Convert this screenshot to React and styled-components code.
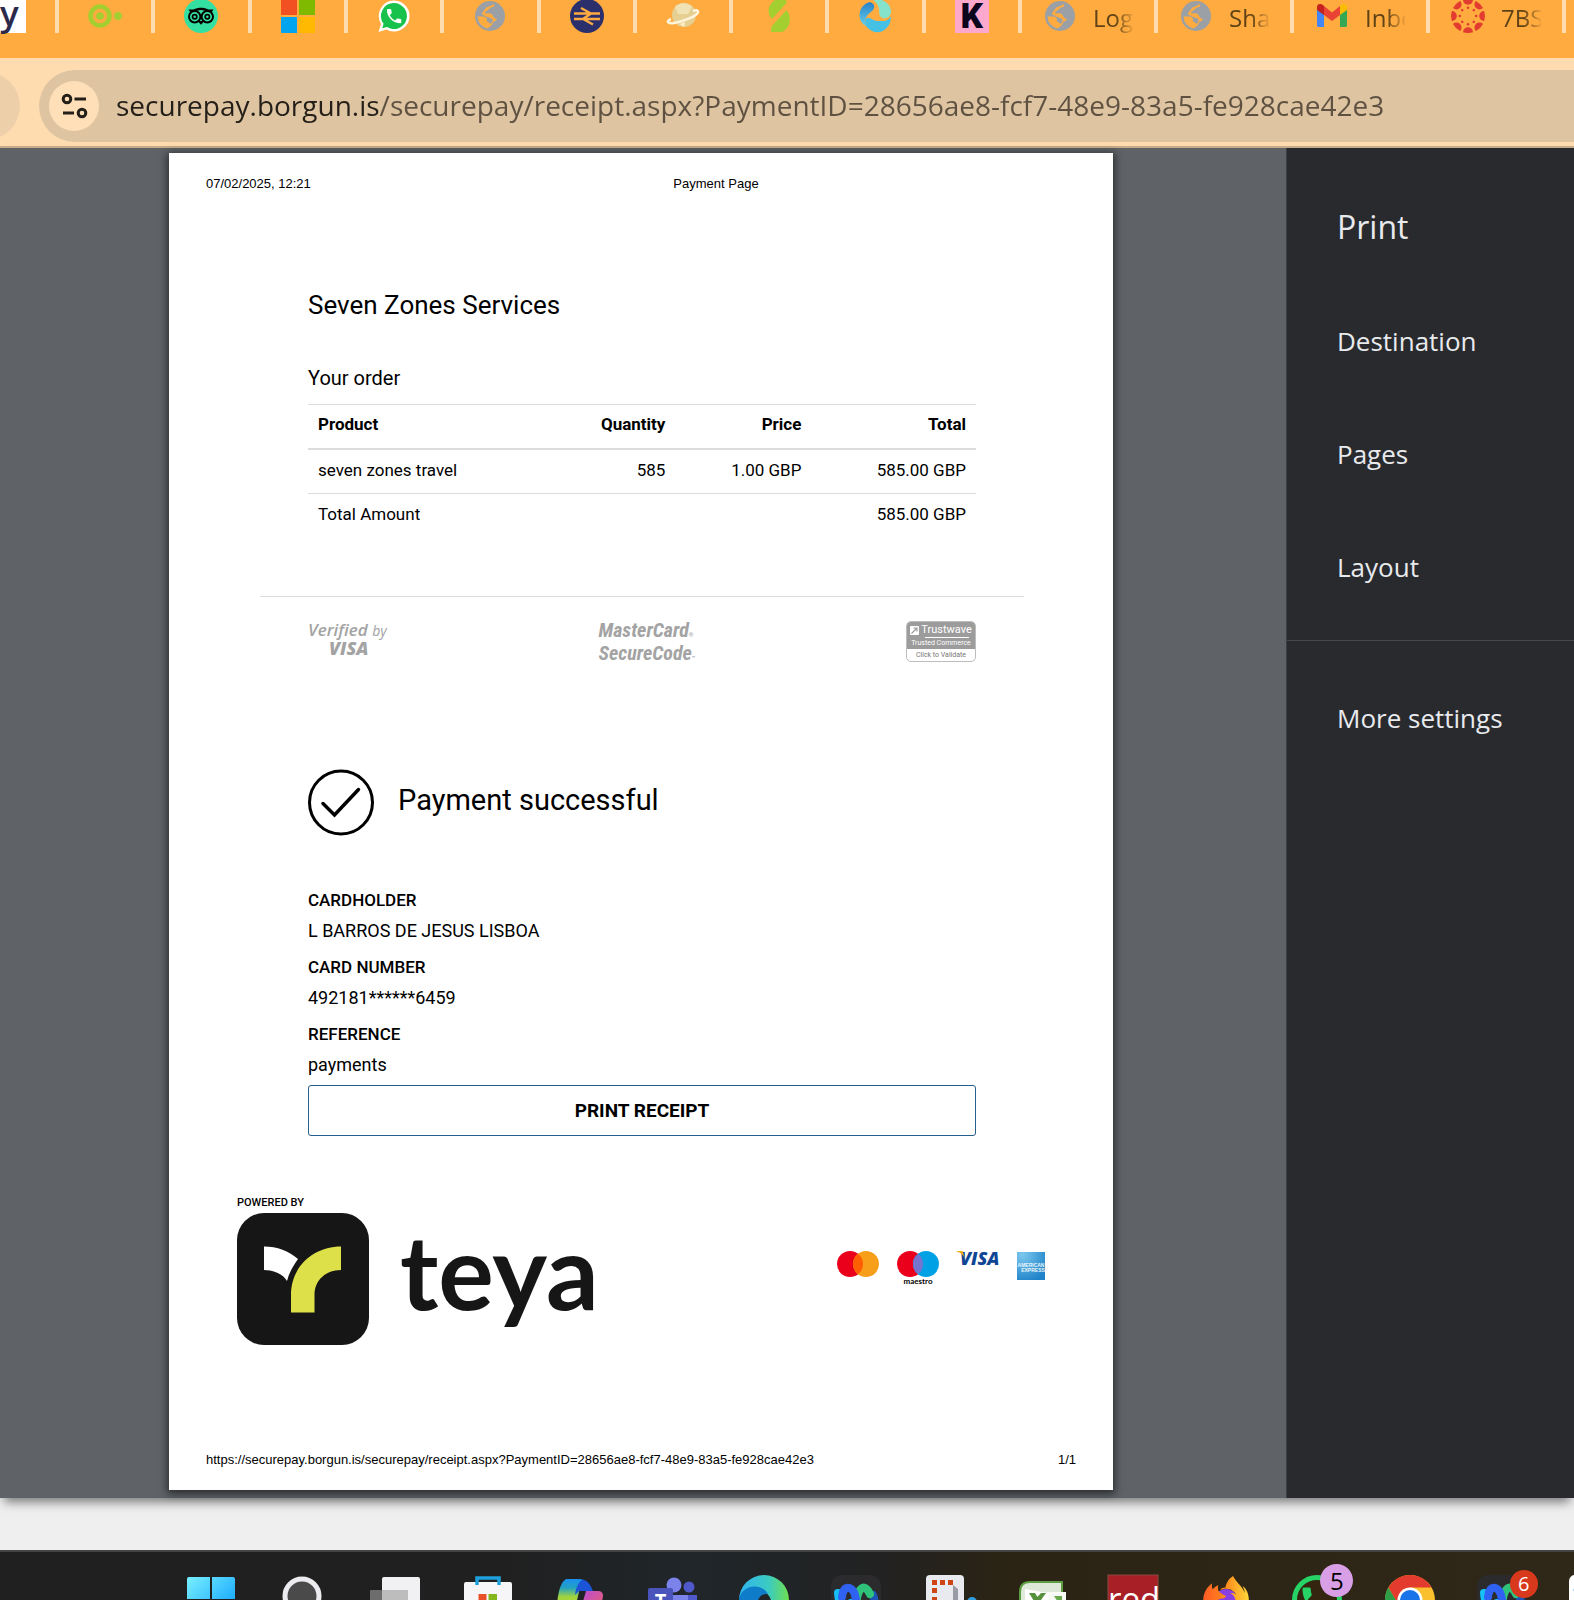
import React from "react";
import styled, { createGlobalStyle } from "styled-components";
import { FaFirefoxBrowser } from "react-icons/fa";

const uiFont = `"Open Sans", "Noto Sans", sans-serif`;
const docFont = `Roboto, "Liberation Sans", sans-serif`;
const arial = `"Liberation Sans", Arial, sans-serif`;

const GlobalStyle = createGlobalStyle`
  *, *::before, *::after { box-sizing: border-box; }
  html, body { margin: 0; padding: 0; background: #202020; }
  h1, h2, h3, p, dl, dd { margin: 0; font-weight: 400; }
  button { font: inherit; color: inherit; background: none; border: 0; padding: 0; }
`;

const Screen = styled.div`
  display: flex;
  flex-direction: column;
  min-height: 100vh;
  overflow: hidden;
  font-family: ${uiFont};
`;

/* ---------- browser chrome ---------- */

const TabStrip = styled.div`
  display: flex;
  height: 58px;
  padding-bottom: 25px;
  overflow: hidden;
  background: #ffab40;
`;

const IconTabs = styled.div`
  display: grid;
  grid-template-columns: repeat(10, 1fr);
  flex: none;
  width: 963px;
`;

const Tab = styled.button`
  display: flex;
  flex: none;
  align-items: flex-end;
  gap: 16px;
  height: 33px;
  width: ${(p) => (p.$wide ? "136px" : "auto")};
  padding-left: ${(p) => (p.$wide ? "21px" : "29px")};
  border-right: 4px solid #ffdcb0;
  font-size: 24px;
  line-height: 30px;
  color: #5f4216;
`;

const FirstTab = styled(Tab)`
  width: 59px;
  padding-left: 0;
`;

const TabTitle = styled.span`
  width: 40px;
  overflow: hidden;
  white-space: nowrap;
  text-align: left;
  mask-image: linear-gradient(90deg, #000 55%, transparent 105%);
`;

const LetterIcon = styled.span`
  display: block;
  flex: none;
  width: ${(p) => p.$width}px;
  height: 34px;
  background: ${(p) => p.$bg};
  color: ${(p) => p.$fg};
  font-family: ${(p) => p.$font};
  font-weight: ${(p) => p.$weight};
  font-size: 35px;
  line-height: ${(p) => p.$line}px;
  text-align: ${(p) => p.$align || "center"};
`;

const Icon = styled.svg`
  display: block;
  flex: none;
  overflow: visible;
  width: ${(p) => p.$w || 34}px;
  height: ${(p) => p.$h || p.$w || 34}px;
`;

const Toolbar = styled.div`
  display: flex;
  align-items: center;
  gap: 19px;
  height: 90px;
  padding-top: 8px;
  background: #ffdcb0;
  border-bottom: 2px solid #c9ad88;
`;

const RoundButton = styled.button`
  flex: none;
  width: 68px;
  height: 68px;
  margin-left: -48px;
  border-radius: 50%;
  background: #edd0aa;
`;

const Omnibox = styled.div`
  display: flex;
  flex: 1;
  align-items: center;
  gap: 17px;
  height: 72px;
  padding-left: 10px;
  border-radius: 36px 0 0 36px;
  background: #dec4a0;
`;

const SiteInfo = styled.button`
  display: grid;
  flex: none;
  place-items: center;
  width: 50px;
  height: 50px;
  border-radius: 50%;
  background: #ffdfb8;
`;

const Address = styled.input`
  flex: 1;
  min-width: 0;
  height: 56px;
  padding: 0 0 2px;
  border: 0;
  outline: 0;
  font-family: ${uiFont};
  font-size: 28px;
  color: #5e5142;
  background: linear-gradient(90deg, #241f19 262px, #5e5142 262px);
  background-clip: text;
  -webkit-text-fill-color: transparent;
`;

/* ---------- print dialog ---------- */

const Dialog = styled.main`
  display: flex;
  flex: 1;
  position: relative;
  background: #5f6368;
  box-shadow: 0 8px 10px -4px rgba(0, 0, 0, 0.5);
`;

const Preview = styled.section`
  display: flex;
  flex: 1;
  justify-content: center;
  align-items: flex-start;
  min-width: 0;
  padding: 5px 4px 8px 0;
`;

const Paper = styled.article`
  width: 100%;
  max-width: 944px;
  padding: 23px 37px 22px;
  background: #fff;
  color: #000;
  font-family: ${docFont};
  font-size: 17px;
  box-shadow: 0 2px 8px 2px rgba(0, 0, 0, 0.55);
`;

const PageMeta = styled.div`
  display: flex;
  font-family: ${arial};
  font-size: 13px;
  line-height: 16px;
`;

const PageDate = styled.span`
  width: 150px;
`;

const PageTitle = styled.span`
  flex: 1;
  text-align: center;
`;

const PageUrl = styled.span`
  flex: 1;
`;

const Receipt = styled.div`
  margin: 97px 100px 0 102px;
`;

const Merchant = styled.h1`
  font-size: 26px;
  line-height: 32px;
`;

const OrderTitle = styled.h2`
  margin-top: 45px;
  font-size: 20px;
  line-height: 24px;
`;

const Table = styled.table`
  width: 100%;
  margin-top: 14px;
  border-spacing: 0;
  table-layout: fixed;
`;

const Col = styled.col`
  width: ${(p) => p.$w};
`;

const HeadCell = styled.th`
  height: 46px;
  padding: 0 10px 5px;
  border-top: 1px solid #dcdcdc;
  border-bottom: 2px solid #dcdcdc;
  text-align: ${(p) => (p.$num ? "right" : "left")};
  font-weight: 700;
`;

const Cell = styled.td`
  height: ${(p) => (p.$total ? 45 : 43)}px;
  padding: 0 10px 4px;
  border-top: ${(p) => (p.$total ? "1px solid #dcdcdc" : "0")};
  text-align: ${(p) => (p.$num ? "right" : "left")};
`;

const Rule = styled.hr`
  height: 1px;
  margin: 58px -48px 24px;
  border: 0;
  background: #dcdcdc;
`;

const Badges = styled.div`
  display: flex;
  justify-content: space-between;
  height: 41px;
  color: #a3a3a3;
`;

const VerifiedBy = styled.div`
  width: 82px;
  font: italic 600 17px/17px ${uiFont};
  white-space: nowrap;
`;

const Small = styled.span`
  font-size: 14px;
  font-weight: 400;
`;

const VisaWord = styled.div`
  padding-left: 21px;
  font: italic 800 18px/18px ${uiFont};
`;

const SecureCode = styled.div`
  width: 99px;
  font: italic 700 20px/18px "Liberation Sans Narrow", "Roboto Condensed", Roboto, sans-serif;
  white-space: nowrap;
`;

const Mark = styled.span`
  font-size: 6px;
  font-style: normal;
`;

const Trustwave = styled.button`
  width: 70px;
  height: 41px;
  overflow: hidden;
  border: 1px solid #bdbdbd;
  border-radius: 5px;
  background: #fff;
  font-family: ${docFont};
  text-align: center;
`;

const TrustTop = styled.span`
  display: flex;
  flex-direction: column;
  align-items: center;
  height: 27px;
  padding: 2px 0 0;
  background: #9c9c9c;
  color: #fff;
  font-size: 7px;
  line-height: 9px;
`;

const TrustName = styled.span`
  display: flex;
  align-items: center;
  gap: 2px;
  font-size: 11px;
  line-height: 12px;
`;

const TrustLine = styled.span`
  width: 44px;
  height: 1px;
  margin: 1px 0 1px 12px;
  background: #fff;
`;

const TrustBottom = styled.span`
  display: block;
  color: #777;
  font-size: 7px;
  line-height: 12px;
`;

const Status = styled.div`
  display: flex;
  align-items: center;
  gap: 24px;
  margin-top: 107px;
`;

const StatusText = styled.h2`
  padding-bottom: 6px;
  font-size: 29px;
  line-height: 36px;
`;

const Details = styled.dl`
  display: grid;
  gap: 5px;
  margin-top: 49px;
`;

const Label = styled.dt`
  line-height: 30px;
  font-weight: 500;
`;

const Value = styled.dd`
  font-size: 18px;
  line-height: 32px;
`;

const PrintButton = styled.button`
  display: block;
  width: 100%;
  height: 51px;
  margin-top: 4px;
  border: 1px solid #24608c;
  border-radius: 3px;
  font-size: 19px;
  font-weight: 700;
`;

const Powered = styled.div`
  margin: 60px 31px 0;
`;

const PoweredLabel = styled.p`
  font-size: 11px;
  line-height: 14px;
  font-weight: 500;
`;

const BrandRow = styled.div`
  display: flex;
  align-items: flex-start;
  justify-content: space-between;
  margin-top: 3px;
`;

const Brand = styled.div`
  display: flex;
  align-items: center;
  gap: 31px;
`;

const BrandName = styled.span`
  padding-bottom: 18px;
  font: 700 104px/114px Lato, sans-serif;
  color: #161616;
`;

const Cards = styled.div`
  display: flex;
  gap: 18px;
  margin-top: 38px;
`;

const PageFoot = styled(PageMeta)`
  margin-top: 107px;
`;

const Sidebar = styled.aside`
  width: 288px;
  flex: none;
  padding-top: 57px;
  border-left: 1px solid #3c4043;
  background: #292a2d;
  color: #e8eaed;
  font-size: 26px;
  line-height: 36px;
`;

const SideTitle = styled.h1`
  padding-left: 50px;
  font-size: 32px;
  line-height: 44px;
`;

const Options = styled.div`
  display: grid;
  gap: 77px;
  padding: 74px 0 55px 50px;
  border-bottom: 1px solid #46484c;
`;

const MoreSettings = styled.button`
  display: block;
  margin: 59px 0 0 50px;
`;

const Shelf = styled.div`
  height: 52px;
  background: #efefef;
`;

/* ---------- taskbar ---------- */

const Taskbar = styled.nav`
  height: 50px;
  padding-left: 165px;
  overflow: hidden;
  border-top: 2px solid #434343;
  background: linear-gradient(90deg, #202020 0%, #202020 32%, #20262a 44%, #222 56%, #2b2414 64%, #2f2717 100%);
`;

const Apps = styled.div`
  display: grid;
  grid-template-columns: repeat(16, 1fr);
  justify-items: center;
  width: 1475px;
  padding-top: 23px;
`;

const AppButton = styled.button`
  position: relative;
  width: 50px;
  height: 50px;
`;

const Count = styled.span`
  position: absolute;
  top: ${(p) => p.$top}px;
  left: ${(p) => p.$left}px;
  width: ${(p) => p.$size}px;
  height: ${(p) => p.$size}px;
  border-radius: 50%;
  background: ${(p) => p.$bg};
  color: ${(p) => p.$fg};
  font-size: ${(p) => p.$font}px;
  line-height: ${(p) => p.$size}px;
  text-align: center;
`;

const PHONE =
  "M6.62 10.79c1.44 2.83 3.76 5.14 6.59 6.59l2.2-2.2c.27-.27.67-.36 1.02-.24 1.12.37 2.33.57 3.57.57.55 0 1 .45 1 1V20c0 .55-.45 1-1 1-9.39 0-17-7.61-17-17 0-.55.45-1 1-1h3.5c.55 0 1 .45 1 1 0 1.25.2 2.45.57 3.57.11.35.03.74-.25 1.02l-2.2 2.2z";

const Globe = () => (
  <Icon viewBox="0 0 34 34">
    <circle cx="17" cy="17" r="15" fill="#9aa0a6" />
    <path d="M22 4.500C23 8 20 7.500 18 8.500S15.500 11 13.500 12 11.500 14.500 14 14.500C17 14 19 14.500 20 17S23 19 23.500 20.500 20 22.500 19.500 24.500 16 28.500 14.500 29.500A12.500 12.500 0 0 1 4.500 17.500C8 17.500 12 17 13.500 19S12.500 22 14.500 22.500 16.500 26 18.500 24 20 20 17.500 19 13.500 18 11 16.500 8 15 11 11.500 13 8.500 16 7.500Z" fill="#ffab40" />
    <path d="M21 4.500Q27 6.500 29 12.500L29.500 16Q25 16.500 22.500 14.500T23.500 10.500 21 7.500Z" fill="#9aa0a6" />
  </Icon>
);

const TargetIcon = () => (
  <Icon viewBox="0 0 34 34">
    <circle cx="12" cy="17" r="9.500" fill="none" stroke="#a4cf30" strokeWidth="4.500" />
    <circle cx="12" cy="17" r="3.800" fill="#a4cf30" />
    <circle cx="30" cy="17" r="4" fill="#a4cf30" />
  </Icon>
);

const OwlIcon = () => (
  <Icon viewBox="0 0 34 34">
    <circle cx="17" cy="17" r="17" fill="#34e0a1" />
    <path d="M4.500 10.500H9.500C14 8 20 8 24.500 10.500H29.500L27.500 13.500 17 15.500 6.500 13.500Z" fill="#000" />
    <path d="M13.500 22H20.500L17 25.800Z" fill="#000" />
    <path d="M11 12.500Q17 9.500 23 12.500L17 17Z" fill="#34e0a1" />
    {[10.7, 23.3].map((x) => (
      <g key={x}>
        <circle cx={x} cy="17.700" r="6.700" fill="#000" />
        <circle cx={x} cy="17.700" r="4.700" fill="#34e0a1" />
        <circle cx={x} cy="17.700" r="3" fill="#000" />
        <circle cx={x} cy="17.700" r="1.300" fill="#34e0a1" />
      </g>
    ))}
  </Icon>
);

const MicrosoftIcon = () => (
  <Icon viewBox="0 0 34 34">
    <path d="M0 0H16V16H0Z" fill="#f25022" />
    <path d="M18 0H34V16H18Z" fill="#7fba00" />
    <path d="M0 18H16V34H0Z" fill="#00a4ef" />
    <path d="M18 18H34V34H18Z" fill="#ffb900" />
  </Icon>
);

const WhatsAppTab = () => (
  <Icon viewBox="0 0 34 34">
    <path d="M17 1.500A15.500 15.500 0 1 1 9.500 30.500L1.500 33 4 25A15.500 15.500 0 0 1 17 1.500Z" fill="#fff" />
    <path d="M17 4A13 13 0 1 1 10 28L5.300 29.300 6.600 24.800A13 13 0 0 1 17 4Z" fill="#16c24b" />
    <path d={PHONE} fill="#fff" transform="translate(7.500 7.500) scale(.8)" />
  </Icon>
);

const RailIcon = () => (
  <Icon viewBox="0 0 34 34">
    <circle cx="17" cy="17" r="17" fill="#2b2f6b" />
    <path d="M4 14.500H30M4 20H30M11 9L21 14.500 13 20 23 25.500" fill="none" stroke="#ffab40" strokeWidth="2.400" />
  </Icon>
);

const PlanetIcon = () => (
  <Icon viewBox="0 0 34 34">
    <circle cx="18" cy="16" r="12" fill="#e5cf91" />
    <path d="M9 8C13 3 22 3 26 8L22 15H12Z" fill="#f1e2b4" />
    <path d="M5 20C0 22 1 25 8 24S32 17 32 13C32 11 29 11 27 12" fill="none" stroke="#fff5dc" strokeWidth="2.600" />
    <path d="M14 25L19 23 18 28Z" fill="#fff1cc" />
  </Icon>
);

const SlashIcon = () => (
  <Icon viewBox="0 0 34 34">
    <path d="M13 1H24L24.500 4 10 20C5 15 5 6 13 1Z" fill="#a4cf30" />
    <path d="M24.500 11L9.500 27.500 9 33H20C29 29 30 17 24.500 11Z" fill="#a4cf30" />
  </Icon>
);

const SwirlIcon = () => (
  <Icon viewBox="0 0 34 34">
    <defs>
      <linearGradient id="sw" x1="0" y1="0" x2="0" y2="1">
        <stop offset="0" stopColor="#2a7fc4" />
        <stop offset="1" stopColor="#63d3ee" />
      </linearGradient>
    </defs>
    <path d="M14 0C21-1 32 2 33 12 33 20 25 21 22 17 20 13 24 7 14 0Z" fill="#86e3cb" />
    <path d="M12 3C18 5 17 10 13 13S6 19 8 27C-1 23-1 6 12 3Z" fill="url(#sw)" />
    <path d="M8 20C10 16 15 22 20 22S30 23 33 17C33 30 22 36 14 32 8 29 6 25 8 20Z" fill="#45c1e6" />
  </Icon>
);

const GmailIcon = () => (
  <Icon viewBox="0 0 34 34">
    <path d="M2 10V26.500A1.500 1.500 0 0 0 3.500 28H9V14Z" fill="#4285f4" />
    <path d="M32 10V26.500A1.500 1.500 0 0 1 30.500 28H25V14Z" fill="#34a853" />
    <path d="M9 7L17 13.500 25 7V16L17 22 9 16Z" fill="#ea4335" />
    <path d="M2 8C2 4.500 6 4 9 7V16L2 11Z" fill="#c5221f" />
    <path d="M32 8C32 4.500 28 4 25 7V16L32 11Z" fill="#fbbc04" />
  </Icon>
);

const CanvasIcon = () => (
  <Icon viewBox="0 0 34 34" fill="#e23b30">
    {[0, 45, 90, 135, 180, 225, 270, 315].map((a) => (
      <g key={a} transform={`rotate(${a} 17 17)`}>
        <path d="M12 .8A17 17 0 0 1 22 .8 5 5 0 0 1 12 .8Z" />
        <circle cx="17" cy="8.800" r="1.300" />
      </g>
    ))}
  </Icon>
);

const TuneIcon = () => (
  <Icon viewBox="0 0 28 28" $w={28} fill="none" stroke="#241f19" strokeWidth="3">
    <circle cx="7" cy="7" r="3.800" />
    <path d="M14.500 7H26M3 21H14" />
    <circle cx="22" cy="21" r="3.800" />
  </Icon>
);

const CheckCircle = () => (
  <Icon viewBox="0 0 66 67" $w={66} $h={67} fill="none" stroke="#000" strokeWidth="3">
    <circle cx="33" cy="33.500" r="31.500" />
    <path d="M15 34.500L26.500 46 50.500 20.500" strokeLinecap="round" strokeWidth="3.500" />
  </Icon>
);

const TeyaMark = () => (
  <Icon viewBox="0 0 132 132" $w={132}>
    <rect width="132" height="132" rx="27" fill="#161616" />
    <path d="M27 33.500C40 33.500 52 38 61 46 56 53 52 60 50 68 46 61 37 57 27 57Z" fill="#fff" />
    <path d="M104 33.500V57C89 57 77.500 67 77.500 82V99.500H54V82C54 53 77 33.500 104 33.500Z" fill="#dde048" />
  </Icon>
);

const MasterCardIcon = () => (
  <Icon viewBox="0 0 42 34" $w={42} $h={34}>
    <circle cx="13" cy="13" r="13" fill="#eb001b" />
    <circle cx="29" cy="13" r="13" fill="#f79e1b" />
    <path d="M21 2.700A13 13 0 0 1 21 23.300 13 13 0 0 1 21 2.700Z" fill="#ff5f00" />
  </Icon>
);

const MaestroIcon = () => (
  <Icon viewBox="0 0 42 34" $w={42} $h={34}>
    <circle cx="13" cy="13" r="13" fill="#eb001b" />
    <circle cx="29" cy="13" r="13" fill="#00a2e5" />
    <path d="M21 2.700A13 13 0 0 1 21 23.300 13 13 0 0 1 21 2.700Z" fill="#7375cf" />
    <text x="21" y="33" textAnchor="middle" fontFamily="Lato" fontWeight="700" fontSize="8">maestro</text>
  </Icon>
);

const VisaIcon = () => (
  <Icon viewBox="0 0 42 34" $w={42} $h={34}>
    <text x="3" y="13.500" fontFamily="Open Sans" fontStyle="italic" fontWeight="800" fontSize="18" fill="#0e4595">VISA</text>
    <path d="M0 0H5.500L8 7.500C6 3.500 3 1.500 0 .8Z" fill="#f2ae14" />
  </Icon>
);

const AmexIcon = () => (
  <Icon viewBox="0 0 28 34" $w={28} $h={34}>
    <defs>
      <radialGradient id="ax" cx=".2" cy=".1" r="1">
        <stop offset="0" stopColor="#7cc7ee" />
        <stop offset="1" stopColor="#1e83c8" />
      </radialGradient>
    </defs>
    <rect y="1" width="28" height="28" fill="url(#ax)" />
    <text x="14" y="15.500" textAnchor="middle" fontFamily="Liberation Sans" fontWeight="700" fontSize="5" fill="#e8f5fc">AMERICAN</text>
    <text x="16" y="21" textAnchor="middle" fontFamily="Liberation Sans" fontWeight="700" fontSize="5" fill="#e8f5fc">EXPRESS</text>
  </Icon>
);

/* ---------- taskbar drawings ---------- */

const StartIcon = () => (
  <Icon viewBox="0 0 50 50" $w={50}>
    <defs>
      <linearGradient id="wn" x1="0" y1="0" x2="50" y2="50" gradientUnits="userSpaceOnUse">
        <stop offset="0" stopColor="#7df3ff" />
        <stop offset=".7" stopColor="#22b0ff" />
      </linearGradient>
    </defs>
    <path d="M3 2H24V24H1V4A2 2 0 0 1 3 2ZM26 2H47A2 2 0 0 1 49 4V24H26ZM1 26H24V49H1ZM26 26H49V49H26Z" fill="url(#wn)" />
  </Icon>
);

const SearchIcon = () => (
  <Icon viewBox="0 0 50 50" $w={50}>
    <circle cx="24" cy="21" r="17" fill="#4a4a4a" stroke="#ececf0" strokeWidth="5" />
    <path d="M36 34L45 44" stroke="#ececf0" strokeWidth="5" />
  </Icon>
);

const TaskViewIcon = () => (
  <Icon viewBox="0 0 50 50" $w={50}>
    <rect x="12" y="2" width="38" height="38" rx="2" fill="#f1f1f3" />
    <rect y="15" width="12" height="30" rx="1" fill="#6d6d6d" />
    <rect x="12" y="15" width="26" height="25" fill="#bdbdbd" />
  </Icon>
);

const StoreIcon = () => (
  <Icon viewBox="0 0 50 50" $w={50}>
    <path d="M1 9A2 2 0 0 1 3 7H47A2 2 0 0 1 49 9V45H1Z" fill="#f6f6f8" />
    <path d="M14 10V3H36V10" fill="none" stroke="#1da0dc" strokeWidth="3.500" />
    <path d="M15.500 19H23.500V27H15.500Z" fill="#e8502a" />
    <path d="M25.500 19H34V27H25.500Z" fill="#84b71b" />
  </Icon>
);

const CopilotIcon = () => (
  <Icon viewBox="0 0 50 50" $w={50}>
    <defs>
      <linearGradient id="c1" x1="0" y1="0" x2="0" y2="1">
        <stop offset="0" stopColor="#1a8ff0" />
        <stop offset=".3" stopColor="#23a3c0" />
        <stop offset=".6" stopColor="#a4d43c" />
      </linearGradient>
      <linearGradient id="c2" x1="0" y1="0" x2="1" y2="1">
        <stop offset="0" stopColor="#b54be0" />
        <stop offset="1" stopColor="#f0625c" />
      </linearGradient>
    </defs>
    <path d="M11 4H27L20 34H2C2 24 4 8 11 4Z" fill="url(#c1)" />
    <path d="M23 4C33 4 35 9 38 16H24L20 20C21 12 23 8 28 4Z" fill="#1c54d8" />
    <path d="M31 16H43Q48 16 48 21L45 40H24Z" fill="url(#c2)" />
  </Icon>
);

const TeamsIcon = () => (
  <Icon viewBox="0 0 50 50" $w={50}>
    <circle cx="27" cy="10" r="7.500" fill="#7b83eb" />
    <circle cx="42" cy="12" r="5.500" fill="#5059c9" />
    <path d="M36 20H50V40H36Z" fill="#5059c9" />
    <path d="M24 20H41V45H24Z" fill="#7b83eb" />
    <rect x="1" y="13" width="25" height="25" rx="2" fill="#4b53bc" />
    <text x="13.500" y="33" textAnchor="middle" fontFamily="Open Sans" fontWeight="700" fontSize="20" fill="#fff">T</text>
  </Icon>
);

const EdgeIcon = () => (
  <Icon viewBox="0 0 50 50" $w={50}>
    <defs>
      <linearGradient id="ed">
        <stop offset="0" stopColor="#2fb4f0" />
        <stop offset=".6" stopColor="#3ccbc0" />
        <stop offset="1" stopColor="#6fe04e" />
      </linearGradient>
    </defs>
    <path d="M0 25A25 25 0 0 1 50 25C50 32 40 36 31 32 35 24 28 16 18 14 10 12 2 18 0 25Z" fill="url(#ed)" />
    <path d="M0 25C2 10 22 7 29 19 20 18 16 26 20 40A25 25 0 0 1 0 25Z" fill="#0f7cc9" />
  </Icon>
);

const WebexIcon = () => (
  <Icon viewBox="0 0 50 50" $w={50}>
    <rect width="50" height="50" rx="11" fill="#2b2b2d" />
    <g fill="none" strokeWidth="8" strokeLinecap="round">
      <path d="M42 20C45 26 43 34 38 36" stroke="#1c54b8" />
      <path d="M25 34C26 10 34 8 39 19" stroke="#2fc27a" />
      <path d="M7 18C9 42 18 36 20 28" stroke="#16c0f5" />
      <path d="M11 22C12 10 21 10 24 20 26 32 30 38 34 34" stroke="#2f62f2" />
    </g>
  </Icon>
);

const SnipIcon = () => (
  <Icon viewBox="0 0 50 50" $w={50}>
    <rect x="2" width="38" height="46" rx="4" fill="#e9eaf0" />
    <path d="M29 10L34 14V30H29Z" fill="#9a9ca5" />
    <path d="M8 5H13V10H8ZM16 5H21V10H16ZM24 5H29V10H24ZM8 13H13V18H8ZM8 22H13V27H8Z" fill="#cf4416" />
    <circle cx="48" cy="27" r="5" fill="#2f9ede" />
  </Icon>
);

const ExcelIcon = () => (
  <Icon viewBox="0 0 50 50" $w={50}>
    <path d="M14 7H46V40H4V17Q4 7 14 7Z" fill="#dfe9da" stroke="#5e9e43" strokeWidth="2" />
    <path d="M31 17H50V40H31Z" fill="#f7faf5" />
    <path d="M9 14L32 18V40H9Z" fill="#fff" />
    <path d="M13 18H19L29 34H23ZM25 18H30L20 32 16 28Z" fill="#55923c" />
    <path d="M38 21H46V27H42Z" fill="#6aa84f" />
  </Icon>
);

const RedIcon = () => (
  <Icon viewBox="0 0 50 50" $w={50}>
    <rect width="50" height="50" fill="#a81f26" stroke="#8a4a44" />
    <text x="26" y="36" textAnchor="middle" fontFamily="Open Sans" fontSize="33" fill="#fff">red</text>
  </Icon>
);

const FirefoxIcon = () => (
  <Icon viewBox="0 0 50 50" $w={50}>
    <defs>
      <linearGradient id="ff" x1="0" y1="0" x2="1" y2="0">
        <stop offset="0" stopColor="#ff5a24" />
        <stop offset=".5" stopColor="#ff8a1c" />
        <stop offset="1" stopColor="#ffd83a" />
      </linearGradient>
    </defs>
    <circle cx="26" cy="26" r="12" fill="#8a3fe0" />
    <FaFirefoxBrowser x="2" y="1" size="48" fill="url(#ff)" />
  </Icon>
);

const WhatsAppIcon = () => (
  <Icon viewBox="0 0 50 50" $w={50}>
    <circle cx="25" cy="25" r="22.500" fill="#33250f" stroke="#27d367" strokeWidth="5" />
    <path d={PHONE} fill="#27d367" transform="translate(6 8) scale(1.500)" />
  </Icon>
);

const ChromeIcon = () => (
  <Icon viewBox="0 0 50 50" $w={50}>
    <circle cx="25" cy="25" r="25" fill="#fbc02d" />
    <path d="M3.300 12.500A25 25 0 0 1 46.700 12.500H25L14 31Z" fill="#e33b2e" />
    <path d="M3.300 12.500L16 34 25 50A25 25 0 0 1 3.300 12.500Z" fill="#2e9e48" />
    <circle cx="25" cy="25" r="12.500" fill="#fff" />
    <circle cx="25" cy="25" r="10" fill="#1a73e8" />
  </Icon>
);

const WhiteIcon = () => (
  <Icon viewBox="0 0 50 50" $w={50}>
    <rect width="50" height="50" rx="6" fill="#fff" />
    <path d="M4 15L8 12V18Z" fill="#2f9ede" />
  </Icon>
);

const iconTabs = [
  ["Deals", <TargetIcon />],
  ["Tripadvisor", <OwlIcon />],
  ["Microsoft", <MicrosoftIcon />],
  ["WhatsApp", <WhatsAppTab />],
  ["Website", <Globe />],
  ["National Rail", <RailIcon />],
  ["Planet", <PlanetIcon />],
  ["Slash", <SlashIcon />],
  ["Swirl", <SwirlIcon />],
  ["Klarna", <LetterIcon $width={34} $bg="#ffa8cd" $fg="#0b051d" $font={docFont} $weight={900} $line={36}>K</LetterIcon>],
];

const titledTabs = [
  ["Log", <Globe />],
  ["Sha", <Globe />],
  ["Inbo", <GmailIcon />],
  ["7BS", <CanvasIcon />],
];

const apps = [
  ["Start", StartIcon],
  ["Search", SearchIcon],
  ["Task view", TaskViewIcon],
  ["Store", StoreIcon],
  ["Copilot", CopilotIcon],
  ["Teams", TeamsIcon],
  ["Edge", EdgeIcon],
  ["Webex", WebexIcon],
  ["Snipping tool", SnipIcon],
  ["Excel", ExcelIcon],
  ["Red", RedIcon],
  ["Firefox", FirefoxIcon],
  ["WhatsApp", WhatsAppIcon, { $top: -11, $left: 28, $size: 33, $font: 24, $bg: "#d89fe6", $fg: "#000" }],
  ["Chrome", ChromeIcon],
  ["Webex calls", WebexIcon, { $top: -5, $left: 33, $size: 28, $font: 20, $bg: "#d8391c", $fg: "#fff" }],
  ["Notes", WhiteIcon],
];

const details = [
  ["CARDHOLDER", "L BARROS DE JESUS LISBOA"],
  ["CARD NUMBER", "492181******6459"],
  ["REFERENCE", "payments"],
];

export default function App() {
  return (
    <Screen>
      <GlobalStyle />
      <TabStrip>
        <FirstTab aria-label="First tab">
          <LetterIcon $width={26} $bg="#fff" $fg="#2c2a4a" $font={uiFont} $weight={600} $line={28} $align="left">y</LetterIcon>
        </FirstTab>
        <IconTabs>
          {iconTabs.map(([name, icon]) => (
            <Tab key={name} aria-label={name}>{icon}</Tab>
          ))}
        </IconTabs>
        {titledTabs.map(([name, icon]) => (
          <Tab key={name} $wide>
            {icon}
            <TabTitle>{name}</TabTitle>
          </Tab>
        ))}
      </TabStrip>
      <Toolbar>
        <RoundButton aria-label="Reload" />
        <Omnibox>
          <SiteInfo aria-label="View site information"><TuneIcon /></SiteInfo>
          <Address
            aria-label="Address"
            defaultValue="securepay.borgun.is/securepay/receipt.aspx?PaymentID=28656ae8-fcf7-48e9-83a5-fe928cae42e3"
          />
        </Omnibox>
      </Toolbar>

      <Dialog>
        <Preview>
          <Paper>
            <PageMeta>
              <PageDate>07/02/2025, 12:21</PageDate>
              <PageTitle>Payment Page</PageTitle>
            </PageMeta>
            <Receipt>
              <Merchant>Seven Zones Services</Merchant>
              <OrderTitle>Your order</OrderTitle>
              <Table>
                <colgroup>
                  <Col $w="35%" />
                  <Col $w="20%" />
                  <Col $w="136px" />
                  <Col />
                </colgroup>
                <thead>
                  <tr>
                    <HeadCell>Product</HeadCell>
                    <HeadCell $num>Quantity</HeadCell>
                    <HeadCell $num>Price</HeadCell>
                    <HeadCell $num>Total</HeadCell>
                  </tr>
                </thead>
                <tbody>
                  <tr>
                    <Cell>seven zones travel</Cell>
                    <Cell $num>585</Cell>
                    <Cell $num>1.00 GBP</Cell>
                    <Cell $num>585.00 GBP</Cell>
                  </tr>
                  <tr>
                    <Cell $total colSpan={3}>Total Amount</Cell>
                    <Cell $total $num>585.00 GBP</Cell>
                  </tr>
                </tbody>
              </Table>
              <Rule />
              <Badges>
                <VerifiedBy>
                  Verified <Small>by</Small>
                  <VisaWord>VISA</VisaWord>
                </VerifiedBy>
                <SecureCode>
                  MasterCard<Mark>®</Mark>
                  <br />
                  SecureCode<Mark>™</Mark>
                </SecureCode>
                <Trustwave>
                  <TrustTop>
                    <TrustName>
                      <Icon viewBox="0 0 9 9" $w={9}>
                        <rect width="9" height="9" rx="1" fill="#fff" />
                        <path d="M1.500 7.500L7 2M3.500 2H7V5.500" fill="none" stroke="#9c9c9c" strokeWidth="1.200" />
                      </Icon>
                      Trustwave
                    </TrustName>
                    <TrustLine />
                    Trusted Commerce
                  </TrustTop>
                  <TrustBottom>Click to Validate</TrustBottom>
                </Trustwave>
              </Badges>
              <Status>
                <CheckCircle />
                <StatusText>Payment successful</StatusText>
              </Status>
              <Details>
                {details.map(([label, value]) => (
                  <div key={label}>
                    <Label>{label}</Label>
                    <Value>{value}</Value>
                  </div>
                ))}
              </Details>
              <PrintButton>PRINT RECEIPT</PrintButton>
            </Receipt>
            <Powered>
              <PoweredLabel>POWERED BY</PoweredLabel>
              <BrandRow>
                <Brand>
                  <TeyaMark />
                  <BrandName>teya</BrandName>
                </Brand>
                <Cards>
                  <MasterCardIcon />
                  <MaestroIcon />
                  <VisaIcon />
                  <AmexIcon />
                </Cards>
              </BrandRow>
            </Powered>
            <PageFoot>
              <PageUrl>https://securepay.borgun.is/securepay/receipt.aspx?PaymentID=28656ae8-fcf7-48e9-83a5-fe928cae42e3</PageUrl>
              <span>1/1</span>
            </PageFoot>
          </Paper>
        </Preview>
        <Sidebar>
          <SideTitle>Print</SideTitle>
          <Options>
            <span>Destination</span>
            <span>Pages</span>
            <span>Layout</span>
          </Options>
          <MoreSettings>More settings</MoreSettings>
        </Sidebar>
      </Dialog>
      <Shelf />

      <Taskbar aria-label="Taskbar">
        <Apps>
          {apps.map(([name, Drawing, count]) => (
            <AppButton key={name} aria-label={name}>
              <Drawing />
              {count && <Count {...count}>{name === "WhatsApp" ? 5 : 6}</Count>}
            </AppButton>
          ))}
        </Apps>
      </Taskbar>
    </Screen>
  );
}
